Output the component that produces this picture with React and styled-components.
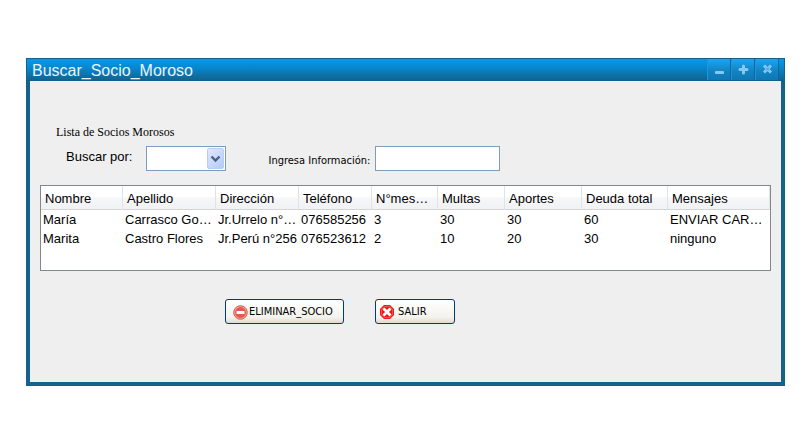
import React from "react";
import styled, { createGlobalStyle } from "styled-components";

const GlobalStyle = createGlobalStyle`
  *, *::before, *::after { box-sizing: border-box; }
  body {
    margin: 0;
    background: #ffffff;
    color: #000000;
    font: 13px/18px "Liberation Sans", Arial, sans-serif;
  }
`;

const uiFont = `"DejaVu Sans Condensed", Tahoma, sans-serif`;

const Page = styled.main`
  padding: 58px 20px 54px 26px;
`;

const Window = styled.section`
  border: 1px solid #15608a;
  background: #15628c;
`;

const TitleBar = styled.header`
  display: flex;
  align-items: stretch;
  justify-content: space-between;
  height: 22px;
  padding: 0 5px;
  background: linear-gradient(#0898ea, #0788d0 40%, #12648f);
  border-bottom: 1px solid #125f89;
`;

const Title = styled.h1`
  margin: 0;
  color: #e8f5fd;
  font-size: 16px;
  font-weight: 400;
  line-height: 23px;
`;

const WindowControls = styled.div`
  display: flex;
  gap: 1px;
  background: #12679a;
  padding-right: 1px;
`;

const WindowButton = styled.button`
  display: flex;
  align-items: center;
  justify-content: center;
  width: 23px;
  padding: 0;
  border: 0;
  border-left: 1px solid #1d95db;
  background: linear-gradient(#1ca5f3, #1182c2 60%, #0e77b3);
`;

const Body = styled.div`
  margin: 0 3px 3px;
  padding: 42px 10px 58px;
  background: #efefef;
`;

const Heading = styled.h2`
  margin: 0 0 5px 16px;
  font: 400 12px/18px "Liberation Serif", "Times New Roman", serif;
`;

const SearchForm = styled.form`
  display: flex;
  align-items: center;
  padding-left: 26px;
  margin-bottom: 14px;
`;

const Label = styled.label`
  margin-bottom: 4px;
  margin-right: 14px;
`;

const SmallLabel = styled.label`
  margin: 4px 5px 0 42px;
  font: 11px/16px ${uiFont};
`;

const SelectBox = styled.div`
  display: grid;
  width: 80px;
  height: 25px;
  border: 1px solid #7f9db9;
  background: #ffffff;
  padding: 1px;

  > * { grid-area: 1 / 1; }
`;

const Select = styled.select`
  appearance: none;
  width: 100%;
  border: 0;
  padding: 0 20px 0 4px;
  background: transparent;
  font: inherit;
`;

const SelectArrow = styled.span`
  display: flex;
  align-items: center;
  justify-content: center;
  justify-self: end;
  width: 17px;
  border: 1px solid #bccdf4;
  border-radius: 2px;
  background: linear-gradient(135deg, #dfe8fd, #b3cbf8);
  pointer-events: none;
`;

const TextInput = styled.input`
  width: 125px;
  height: 25px;
  border: 1px solid #7f9db9;
  border-radius: 0;
  padding: 0 4px;
  background: #ffffff;
  font: inherit;
`;

const TableFrame = styled.div`
  min-height: 86px;
  border: 1px solid #828790;
  background: #ffffff;
`;

const Table = styled.table`
  width: 100%;
  table-layout: fixed;
  border-collapse: separate;
  border-spacing: 0;
`;

const Column = styled.col`
  width: ${({ $size }) => $size}px;
`;

const HeadCell = styled.th`
  height: 24px;
  padding: 2px 4px 0;
  border-right: 1px solid #e0e3e7;
  border-bottom: 1px solid #d5d5d5;
  background: linear-gradient(#ffffff 45%, #f5f6f8 55%, #f1f2f4);
  font-weight: 400;
  text-align: left;
  white-space: nowrap;
  overflow: hidden;
`;

const Cell = styled.td`
  height: 19px;
  padding: 0 2px;
  white-space: nowrap;
`;

const Actions = styled.div`
  display: flex;
  gap: 31px;
  margin: 28px 0 0 185px;
`;

const ActionButton = styled.button`
  display: flex;
  align-items: center;
  gap: ${({ $gap }) => $gap}px;
  width: ${({ $width }) => $width}px;
  height: 25px;
  padding: 1px 0 0 ${({ $inset }) => $inset}px;
  border: 1px solid #003c74;
  border-radius: 3px;
  background: linear-gradient(#ffffff, #f3f2ec 75%, #dfdbd0);
  color: #000000;
  font: 11px/16px ${uiFont};
  white-space: nowrap;
`;

const columns = [
  ["Nombre", 82],
  ["Apellido", 93],
  ["Dirección", 83],
  ["Teléfono", 73],
  ["N°mes…", 66],
  ["Multas", 67],
  ["Aportes", 77],
  ["Deuda total", 86],
  ["Mensajes", 102],
];

const members = [
  ["María", "Carrasco Go…", "Jr.Urrelo n°…", "076585256", "3", "30", "30", "60", "ENVIAR CAR…"],
  ["Marita", "Castro Flores", "Jr.Perú n°256", "076523612", "2", "10", "20", "30", "ninguno"],
];

const MinimizeIcon = () => (
  <svg width="11" height="11" viewBox="0 0 11 11" aria-hidden="true">
    <rect x="1" y="7" width="9" height="3" rx="1" fill="#86c8ee" />
  </svg>
);

const MaximizeIcon = () => (
  <svg width="11" height="11" viewBox="0 0 11 11" aria-hidden="true">
    <path d="M5.5 2v7M2 5.5h7" stroke="#86c8ee" strokeWidth="3" strokeLinecap="round" />
  </svg>
);

const CloseIcon = () => (
  <svg width="11" height="11" viewBox="0 0 11 11" aria-hidden="true">
    <path d="M2 1.5l7 7M9 1.5l-7 7" stroke="#86c8ee" strokeWidth="3" />
    <path d="M4 3.5l3 3M7 3.5l-3 3" stroke="#3a9cd5" strokeWidth="1" />
  </svg>
);

const ChevronIcon = () => (
  <svg width="11" height="8" viewBox="0 0 11 8" aria-hidden="true">
    <path d="M1.5 1.5l4 4 4-4" fill="none" stroke="#4d6185" strokeWidth="2.4" />
  </svg>
);

const RemoveIcon = () => (
  <svg width="15" height="15" viewBox="0 0 15 15" aria-hidden="true">
    <circle cx="7.5" cy="7.5" r="6.8" fill="#f0a29c" stroke="#cf605a" strokeWidth="1" />
    <circle cx="7.5" cy="7.5" r="5.4" fill="#e9574f" />
    <rect x="3.5" y="6" width="8" height="3" rx="0.5" fill="#ffffff" />
  </svg>
);

const ExitIcon = () => (
  <svg width="14" height="14" viewBox="0 0 14 14" aria-hidden="true">
    <path d="M4 0h6l4 4v6l-4 4H4l-4-4V4z" fill="#f01818" />
    <path d="M4.5 1.5h5l3 3v5l-3 3h-5l-3-3v-5z" fill="none" stroke="#ff6b64" strokeWidth="0.7" />
    <path d="M3.5 3.5l7 7M10.5 3.5l-7 7" stroke="#ffffff" strokeWidth="2.8" />
  </svg>
);

export default function App() {
  return (
    <>
      <GlobalStyle />
      <Page>
        <Window aria-labelledby="window-title">
          <TitleBar>
            <Title id="window-title">Buscar_Socio_Moroso</Title>
            <WindowControls>
              <WindowButton type="button" aria-label="Minimizar"><MinimizeIcon /></WindowButton>
              <WindowButton type="button" aria-label="Maximizar"><MaximizeIcon /></WindowButton>
              <WindowButton type="button" aria-label="Cerrar"><CloseIcon /></WindowButton>
            </WindowControls>
          </TitleBar>
          <Body>
            <Heading>Lista de Socios Morosos</Heading>
            <SearchForm onSubmit={(event) => event.preventDefault()}>
              <Label htmlFor="criterio">Buscar por:</Label>
              <SelectBox>
                <Select id="criterio" defaultValue="">
                  <option value="" />
                </Select>
                <SelectArrow><ChevronIcon /></SelectArrow>
              </SelectBox>
              <SmallLabel htmlFor="informacion">Ingresa Información:</SmallLabel>
              <TextInput id="informacion" type="text" />
            </SearchForm>
            <TableFrame>
              <Table>
                <colgroup>
                  {columns.map(([name, size]) => <Column key={name} $size={size} />)}
                </colgroup>
                <thead>
                  <tr>
                    {columns.map(([name]) => <HeadCell key={name} scope="col">{name}</HeadCell>)}
                  </tr>
                </thead>
                <tbody>
                  {members.map((member) => (
                    <tr key={member[0]}>
                      {member.map((value, index) => <Cell key={columns[index][0]}>{value}</Cell>)}
                    </tr>
                  ))}
                </tbody>
              </Table>
            </TableFrame>
            <Actions>
              <ActionButton type="button" $width={119} $inset={7} $gap={1}>
                <RemoveIcon />
                ELIMINAR_SOCIO
              </ActionButton>
              <ActionButton type="button" $width={80} $inset={4} $gap={4}>
                <ExitIcon />
                SALIR
              </ActionButton>
            </Actions>
          </Body>
        </Window>
      </Page>
    </>
  );
}
